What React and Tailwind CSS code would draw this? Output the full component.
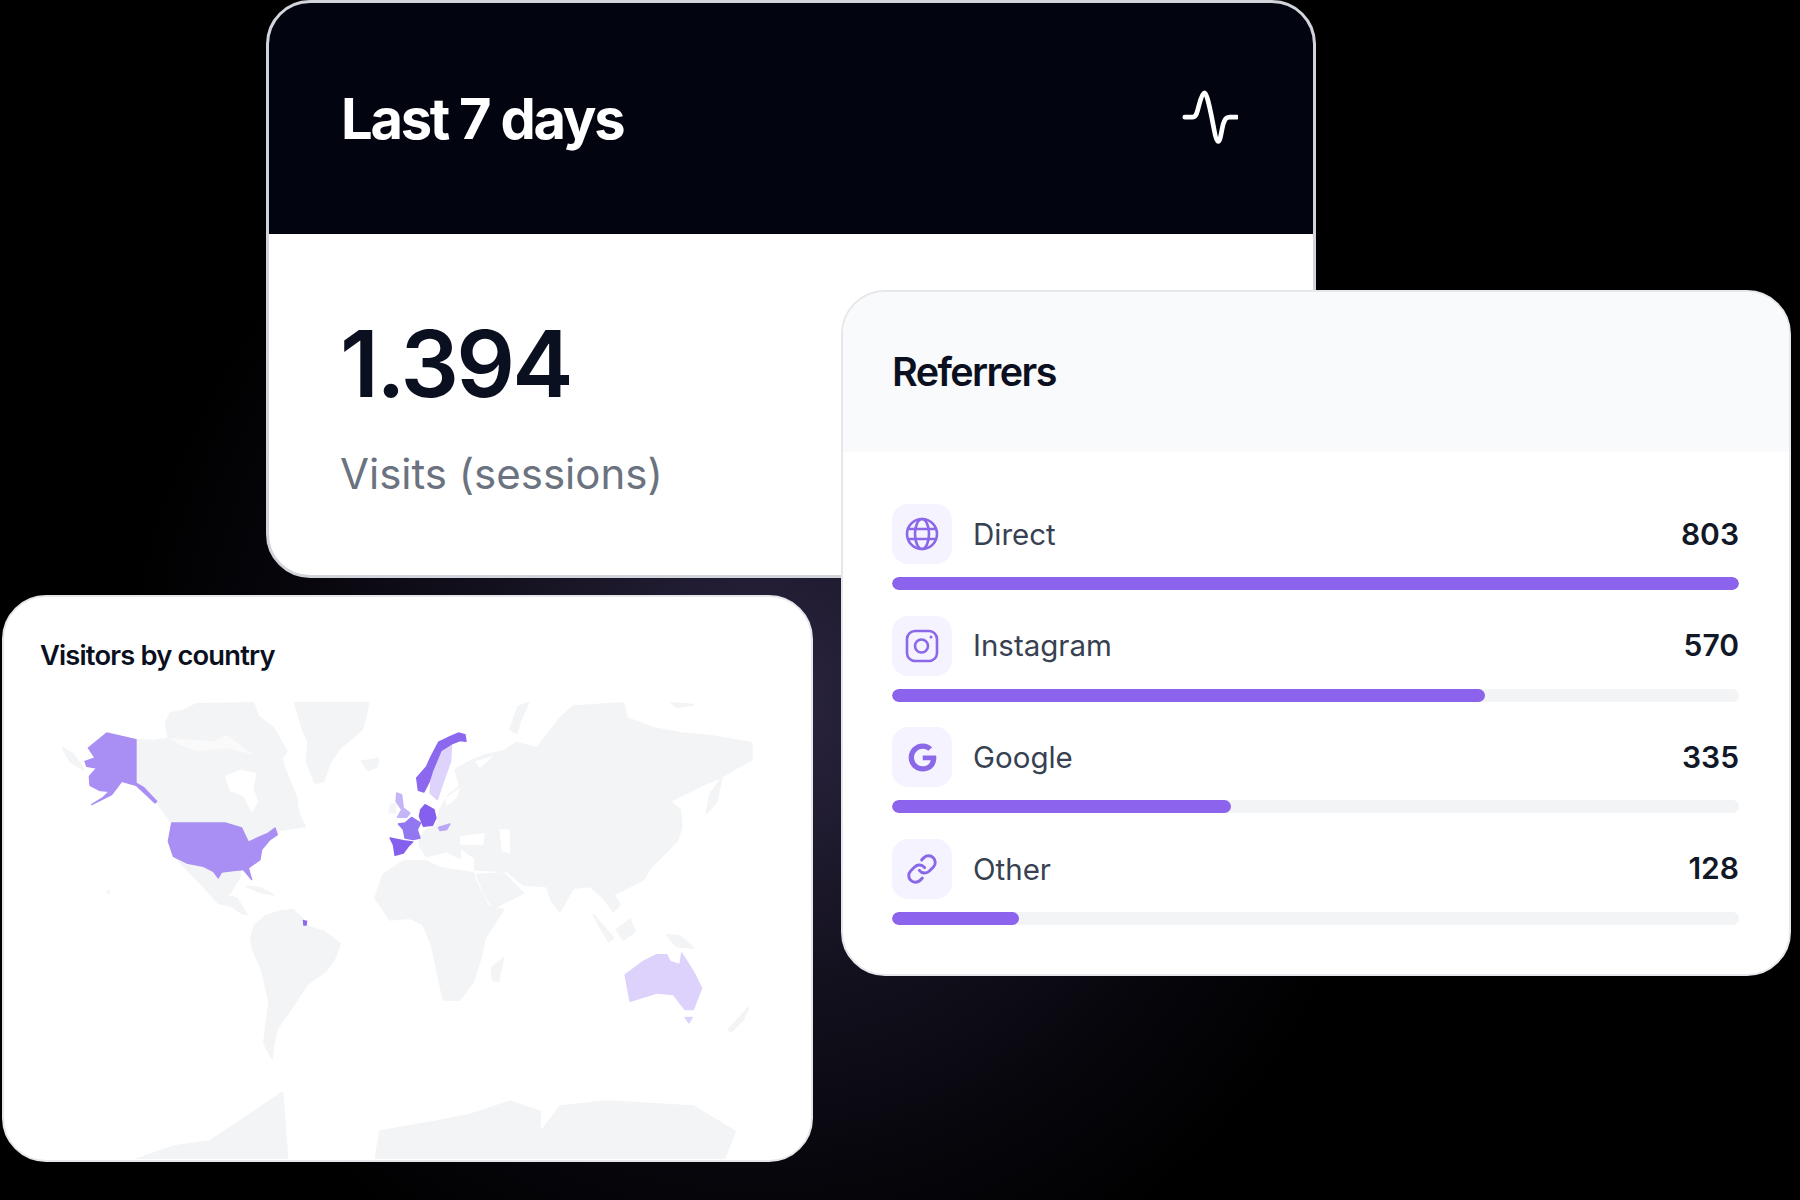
import { Link } from 'lucide-react';
import { FaGoogle } from 'react-icons/fa';

const referrers = [
  { name: 'Direct', count: 803, width: '100%', icon: 'globe' },
  { name: 'Instagram', count: 570, width: '70%', icon: 'instagram' },
  { name: 'Google', count: 335, width: '40%', icon: 'google' },
  { name: 'Other', count: 128, width: '15%', icon: 'link' },
];

function GlobeIcon() {
  return (
    <svg width="34" height="34" viewBox="0 0 34 34" fill="none" stroke="#8b68e8" strokeWidth="2.6" strokeLinecap="round">
      <circle cx="17" cy="17" r="15" />
      <ellipse cx="17" cy="17" rx="7" ry="15" />
      <path d="M3.5 12h27M3.5 22h27" />
    </svg>
  );
}

function InstagramIcon() {
  return (
    <svg width="34" height="34" viewBox="0 0 34 34" fill="none" stroke="#8b68e8" strokeWidth="2.6">
      <rect x="2" y="2" width="30" height="30" rx="8" />
      <circle cx="16.5" cy="17" r="6.5" />
      <circle cx="26" cy="8" r="1.5" fill="#8b68e8" stroke="none" />
    </svg>
  );
}

function RowIcon({ icon }) {
  switch (icon) {
    case 'globe':
      return <GlobeIcon />;
    case 'instagram':
      return <InstagramIcon />;
    case 'google':
      return <FaGoogle className="w-[29px] h-[29px] text-[#8b68e8]" />;
    default:
      return <Link className="w-[32px] h-[32px] text-[#8b68e8]" strokeWidth={2.2} />;
  }
}

function WorldMap() {
  return (
    <svg width="740" height="461" viewBox="0 0 2220 1383" className="block blur-[0.6px]" strokeLinejoin="round">
      <g fill="#f3f4f6" stroke="#f3f4f6" strokeWidth="6">
        {/* north america */}
        <path d="M288 125L340 128 385 122 378 75 392 45 430 38 470 18 640 15 655 55 700 90 740 160 725 180 735 215 770 300 775 345 795 385 725 395 690 405 625 432 605 390 555 375 395 375 350 310 288 255Z" />
        <path d="M68 150L100 170 130 215 90 190Z" />
        <path d="M400 470L440 495 490 505 520 520 535 540 545 525 545 590 590 600 620 650 605 645 575 625 535 615 495 570 455 530Z" />
        <path d="M545 525L600 515 600 535 570 585 545 590Z" />
        <path d="M620 565L660 570 700 590 660 582Z" />
        <circle cx="205" cy="582" r="3" />
        {/* south america */}
        <path d="M633 720L645 680 680 652 720 640 759 635 790 665 806 686 850 700 900 737 880 790 853 822 800 860 774 901 740 950 712 991 700 1040 696 1081 672 1036 680 970 688 912 664 810 640 760Z" />
        {/* greenland, iceland */}
        <path d="M765 15L985 15 975 65 965 95 900 150 870 195 850 250 825 255 800 190 805 130 790 100Z" />
        <path d="M965 190L1015 182 1012 205 985 217Z" />
        <g transform="translate(960 0)">
          {/* eurasia */}
          <path d="M178 422L200 395 228 385 240 335 262 295 300 265 285 215 340 185 380 170 430 160 470 135 530 150 570 100 600 60 640 25 790 15 800 60 880 90 960 105 1060 115 1175 135 1175 185 1120 215 1080 240 1040 255 990 280 930 310 960 335 965 390 950 430 900 480 870 510 850 545 800 570 760 590 780 620 760 640 730 600 690 565 640 570 600 640 575 610 560 565 490 560 440 520 345 515 345 480 300 450 300 480 260 460 200 475 180 445Z" />
          <path d="M450 95L475 25 505 15 480 70 470 105Z" />
          <path d="M935 15L1000 20 950 28Z" />
          <path d="M92 322L105 318 105 345 88 342Z" />
          {/* africa, arabia */}
          <path d="M45 600L70 530 130 490 200 490 240 510 340 525 345 545 385 625 430 635 375 720 365 770 340 850 300 905 250 905 215 740 190 680 150 660 90 665Z" />
          <path d="M350 530L430 525 490 585 400 630 375 590Z" />
          <path d="M395 810L430 780 415 850 398 845Z" />
          {/* islands */}
          <path d="M1040 345L1050 290 1085 240 1070 310Z" />
          <path d="M700 650L760 720 745 730Z" />
          <path d="M770 695L810 665 825 700 790 725Z" />
          <path d="M920 710L960 715 1000 750 950 745Z" />
          <path d="M1105 995L1165 930 1150 965 1115 1000Z" />
          {/* antarctica */}
          <path d="M45 1390L60 1300 230 1270 330 1250 450 1210 540 1240 540 1305 600 1225 740 1210 1000 1225 1125 1300 1090 1390Z" />
        </g>
        <path d="M272 1390L400 1345 508 1330 600 1270 727 1183 743 1390Z" />
      </g>
      {/* sea cut outs */}
      <g fill="#ffffff">
        <path d="M555 235L600 215 650 225 640 270 655 310 635 345 610 295 570 280Z" />
        <path d="M385 120L520 130 560 110 640 170 560 150 470 160 420 140Z" opacity="0.55" />
        <g transform="translate(960 0)">
          <path d="M300 415L375 405 370 440 300 440Z" />
          <path d="M418 392L450 395 450 465 425 460Z" />
          <path d="M255 300L300 270 290 300 260 325Z" />
          <path d="M345 190L400 175 360 210Z" />
        </g>
      </g>
      <g fill="#a98ff3" stroke="#a98ff3" strokeWidth="4">
        <path d="M200 105L288 125 288 255 310 268 350 310 345 315 310 282 288 262 245 250 230 270 215 290 155 320 190 298 208 280 180 278 150 262 148 235 170 210 140 205 135 190 165 180 145 150Z" />
        <path d="M395 375L555 375 605 390 625 432 685 405 705 390 712 410 690 425 665 455 660 485 625 510 635 545 610 515 580 518 545 522 535 540 520 520 490 505 440 495 400 475 385 430Z" />
      </g>
      <path d="M788 665L802 668 800 683 790 683Z" fill="#8b68ee" />
      <g transform="translate(960 0)" strokeWidth="4">
        <path d="M275 135L272 190 247 260 232 305 210 285 215 225 240 158Z" fill="#ddd3fb" stroke="#ddd3fb" />
        <path d="M170 240L200 205 212 178 236 132 270 116 295 105 315 110 318 130 300 128 275 138 243 158 218 218 208 250 192 282 175 277Z" fill="#8b68ee" stroke="#8b68ee" />
        <path d="M110 285L125 290 130 330 150 345 140 358 112 358 125 335 108 310Z" fill="#c5b5f8" stroke="#c5b5f8" />
        <path d="M195 320L222 335 228 360 218 382 190 385 178 355 182 335Z" fill="#8560ee" stroke="#8560ee" />
        <path d="M115 378L135 375 155 358 182 375 172 395 180 420 160 425 135 420 130 395Z" fill="#9277f1" stroke="#9277f1" />
        <path d="M90 420L130 428 158 432 145 445 130 465 105 472 100 440 95 430Z" fill="#8560ee" stroke="#8560ee" />
        <path d="M235 388L270 378 260 395 240 398Z" fill="#b9a6f7" stroke="#b9a6f7" />
        <path d="M795 830L850 790 890 770 920 770 930 790 960 800 965 765 1000 820 1025 870 1000 935 975 935 940 890 890 885 810 910Z" fill="#ddd2fb" stroke="#ddd2fb" />
        <path d="M975 958L997 958 987 975Z" fill="#ddd2fb" stroke="#ddd2fb" />
      </g>
    </svg>
  );
}

export default function App() {
  return (
    <div
      className="relative w-[1800px] h-[1200px] overflow-hidden bg-[radial-gradient(circle_at_760px_700px,#2c2642_0px,#14111f_280px,#07060c_480px,#000000_640px)]"
      style={{ fontFamily: 'Inter, "Noto Sans", sans-serif' }}
    >
      {/* top card */}
      <div className="absolute left-[266px] top-0 w-[1050px] h-[578px] rounded-[44px] border-[3px] border-[#d1d5db] bg-white overflow-hidden">
        <div className="h-[231px] bg-[#02040f] flex items-center justify-between pl-[72px] pr-[75px]">
          <h1 className="text-[56px] font-bold text-white tracking-[-0.04em]">Last 7 days</h1>
          <svg width="56" height="58" viewBox="0 0 60 60" fill="none" stroke="#fff" strokeWidth="5" strokeLinecap="round" strokeLinejoin="round">
            <path d="M3 28H11C15 28 16 24 18 16 20 8 22 2 24 2 26 2 28 10 31 24 34 38 36 54 39 54 41 54 42 44 44 36 46 30 47 28 51 28H59" />
          </svg>
        </div>
        <div className="pl-[71px] pt-[84px]">
          <p className="text-[92px] leading-none font-semibold text-[#0b1020] tracking-[-0.03em]">1.394</p>
          <p className="mt-[43px] text-[42px] leading-none text-[#6b7280]">Visits (sessions)</p>
        </div>
      </div>

      {/* map card */}
      <div className="absolute left-[2px] top-[595px] w-[811px] h-[567px] rounded-[44px] border-2 border-[#e5e7eb] bg-white overflow-hidden">
        <h2 className="pl-[36px] pt-[41px] text-[27.3px] leading-[36px] font-semibold text-[#0b1020] tracking-[-0.03em]">Visitors by country</h2>
        <div className="ml-[36px] mt-[24px]">
          <WorldMap />
        </div>
      </div>

      {/* referrers card */}
      <div className="absolute left-[841px] top-[290px] w-[950px] h-[686px] rounded-[44px] border-2 border-[#e5e7eb] bg-white overflow-hidden">
        <div className="h-[160px] bg-[#f9fafb] flex items-center pl-[49px] pt-[1px]">
          <h2 className="text-[39.5px] font-semibold text-[#0b1020] tracking-[-0.04em]">Referrers</h2>
        </div>
        <div className="pl-[49px] pr-[50px] pt-[52px] flex flex-col gap-[25.6px]">
          {referrers.map((item) => (
            <div key={item.name}>
              <div className="flex items-center h-[60px]">
                <div className="w-[60px] h-[60px] rounded-[16px] bg-[#f5f3ff] flex items-center justify-center">
                  <RowIcon icon={item.icon} />
                </div>
                <span className="ml-[21px] text-[29.5px] text-[#374151]">{item.name}</span>
                <span className="ml-auto text-[30px] font-semibold text-[#111827]">{item.count}</span>
              </div>
              <div className="mt-[13px] h-[13px] rounded-full bg-[#f3f4f6] overflow-hidden">
                <div className="h-full rounded-full bg-[#8b63ec]" style={{ width: item.width }} />
              </div>
            </div>
          ))}
        </div>
      </div>
    </div>
  );
}
